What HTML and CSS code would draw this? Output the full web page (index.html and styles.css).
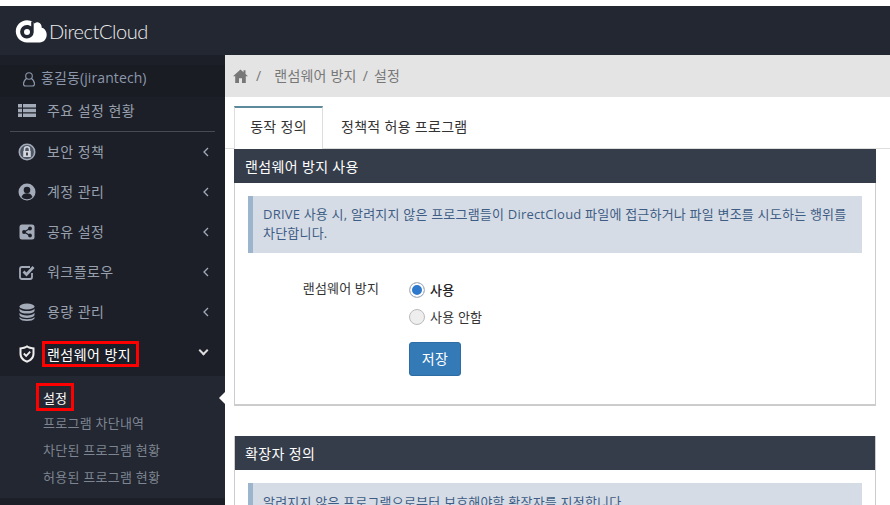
FILE: index.html
```html
<!DOCTYPE html>
<html lang="ko">
<head>
<meta charset="utf-8">
<title>DirectCloud</title>
<link rel="stylesheet" href="styles.css">
</head>
<body>
<header class="topbar">
  <svg class="logo" width="33" height="25" viewBox="0 0 33 25"><path fill="#fff" d="M12 1.200c2.300 0 4.500.7 6.200 2 .5.400.8.800 1.300 1.300C20.700 3.300 22.300 3 23.500 3.500c2.200.8 3.300 3 3.200 5.300 2.900.6 5 3.600 5 7 0 4.300-3 7.700-7 7.700H12C5.800 23.500.8 18.500.8 12.300.8 6.200 5.800 1.200 12 1.200z"/><path fill="#222732" d="M16.200 2.800h2.500v10.400a6.800 6.800 0 1 1-6.800-7.200c1.600 0 3.100.5 4.300 1.500z"/><circle cx="12" cy="13" r="3" fill="#fff"/></svg>
  <span class="brand">DirectCloud</span>
</header>
<div class="layout">
  <aside class="sidebar">
    <div class="user">
      <svg class="user-icon" width="14" height="16" viewBox="0 0 14 16"><circle cx="7" cy="5" r="3.300" fill="none" stroke="#8d97ab" stroke-width="1.100"/><path d="M4.500 7.500C2.500 9 1.500 11 1.500 13c0 1.300.7 2 2 2h7c1.300 0 2-.7 2-2 0-2-1-4-3-5.500" fill="none" stroke="#8d97ab" stroke-width="1.100"/></svg>
      <span class="user-name">홍길동(jirantech)</span>
    </div>
    <a class="item first"><svg class="ico" viewBox="0 0 18 16"><path fill="#a3abb9" d="M0 1h4v3.400H0zM5 1h13v3.400H5zM0 5.800h4v3.400H0zM5 5.800h13v3.400H5zM0 10.600h4V14H0zM5 10.600h13V14H5z"/></svg><span class="lbl">주요 설정 현황</span></a>
    <div class="divider"></div>
    <a class="item"><svg class="ico" viewBox="0 0 18 18"><circle cx="9" cy="9" r="8.500" fill="#a3abb9"/><circle cx="9" cy="9" r="6.900" fill="#4e5564"/><path fill="none" stroke="#d2d6de" stroke-width="1.500" d="M6.500 8V6.300a2.500 2.500 0 0 1 5 0V8"/><path fill="#d2d6de" d="M5.200 8h7.600v6H5.200z"/><path fill="#1c1f27" d="M8.200 9.500h1.600v3H8.200z"/></svg><span class="lbl">보안 정책</span><svg class="chev" viewBox="0 0 6 10"><path d="M5 1 1 5l4 4" fill="none" stroke="#a3abb9" stroke-width="1.300"/></svg></a>
    <a class="item"><svg class="ico" viewBox="0 0 18 18"><circle cx="9" cy="9" r="8.500" fill="#a3abb9"/><circle cx="9" cy="7" r="3.300" fill="#1c1f27"/><path fill="#1c1f27" d="M3.500 14c1-2.800 3-3.700 5.500-3.700s4.500.9 5.500 3.700A7.300 7.300 0 0 1 9 16.200 7.300 7.300 0 0 1 3.500 14z"/></svg><span class="lbl">계정 관리</span><svg class="chev" viewBox="0 0 6 10"><path d="M5 1 1 5l4 4" fill="none" stroke="#a3abb9" stroke-width="1.300"/></svg></a>
    <a class="item"><svg class="ico" viewBox="0 0 18 18"><rect x="1.500" y="1.500" width="15" height="15" rx="2.500" fill="#a3abb9"/><circle cx="12" cy="5.500" r="1.900" fill="#1c1f27"/><circle cx="12" cy="12.500" r="1.900" fill="#1c1f27"/><circle cx="6" cy="9" r="1.900" fill="#1c1f27"/><path d="M12 5.500 6 9l6 3.500" fill="none" stroke="#1c1f27" stroke-width="1.200"/></svg><span class="lbl">공유 설정</span><svg class="chev" viewBox="0 0 6 10"><path d="M5 1 1 5l4 4" fill="none" stroke="#a3abb9" stroke-width="1.300"/></svg></a>
    <a class="item"><svg class="ico" viewBox="0 0 18 18"><path fill="none" stroke="#a3abb9" stroke-width="1.800" d="M14 10v4c0 1.200-.6 2-2 2H4c-1.400 0-2-.8-2-2V6c0-1.400.6-2 2-2h8"/><path fill="none" stroke="#a3abb9" stroke-width="2.800" d="m5.500 8.500 3 3 7-7.500"/></svg><span class="lbl">워크플로우</span><svg class="chev" viewBox="0 0 6 10"><path d="M5 1 1 5l4 4" fill="none" stroke="#a3abb9" stroke-width="1.300"/></svg></a>
    <a class="item"><svg class="ico" viewBox="0 0 18 18"><ellipse cx="9" cy="3.500" rx="7.500" ry="3" fill="#a3abb9"/><path fill="#a3abb9" d="M1.500 5.500c1 1.800 4 2.600 7.500 2.600s6.500-.8 7.500-2.600V8c-1 1.800-4 2.600-7.500 2.600S2.500 9.800 1.500 8zM1.500 9.800c1 1.800 4 2.600 7.500 2.600s6.500-.8 7.500-2.600v2.500c-1 1.800-4 2.600-7.500 2.600s-6.500-.8-7.500-2.600zM1.500 14c1 1.600 4 2.200 7.500 2.200s6.500-.6 7.500-2.200v1.500c-1 1.700-4 2.500-7.500 2.500s-6.500-.8-7.500-2.500z"/></svg><span class="lbl">용량 관리</span><svg class="chev" viewBox="0 0 6 10"><path d="M5 1 1 5l4 4" fill="none" stroke="#a3abb9" stroke-width="1.300"/></svg></a>
    <a class="item active"><svg class="ico" viewBox="0 0 18 18"><path fill="#eee" d="M9 .3c2 1.300 4.500 2.100 7.500 2.300v6.100c0 4.400-3 7.500-7.500 9-4.500-1.500-7.500-4.600-7.500-9V2.600C4.500 2.400 7 1.600 9 .3z"/><path fill="#1c1f27" d="M9 2.500c1.700 1 3.500 1.500 5.500 1.800v4.400c0 3.200-2.200 5.500-5.500 6.800-3.300-1.300-5.500-3.600-5.500-6.800V4.300C5.500 4 7.300 3.500 9 2.500z"/><path fill="none" stroke="#eee" stroke-width="1.800" d="m5.800 8.500 2.400 2.400 4-4.200"/></svg><span class="lbl"><span class="mark mark-parent">랜섬웨어 방지</span></span><span class="chev-down"></span></a>
    <ul class="submenu">
      <li class="current"><span class="mark mark-sub">설정</span></li>
      <li>프로그램 차단내역</li>
      <li>차단된 프로그램 현황</li>
      <li>허용된 프로그램 현황</li>
    </ul>
    <span class="notch"></span>
  </aside>
  <main class="content">
    <nav class="crumbs">
      <svg class="home" width="15" height="14" viewBox="0 0 15 14"><path fill="#777" d="M7.500 .5 0 7.300h2.200V14h3.800V9.300h3V14h3.800V7.300H15L12.500 5V1.200h-2v2z"/></svg>
      <span class="sep first-sep">/</span><span class="crumb">랜섬웨어 방지</span><span class="sep">/</span><span class="crumb last">설정</span>
    </nav>
    <div class="tabs">
      <div class="tab on">동작 정의</div>
      <div class="tab">정책적 허용 프로그램</div>
    </div>
    <section class="panel first-panel">
      <h2 class="panel-head">랜섬웨어 방지 사용</h2>
      <div class="panel-body">
        <p class="alert">DRIVE 사용 시, 알려지지 않은 프로그램들이 DirectCloud 파일에 접근하거나 파일 변조를 시도하는 행위를 차단합니다.</p>
        <div class="form">
          <div class="form-label">랜섬웨어 방지</div>
          <div class="form-ctl">
            <div class="radio-row sel"><span class="radio on"></span>사용</div>
            <div class="radio-row"><span class="radio"></span>사용 안함</div>
            <button class="btn">저장</button>
          </div>
        </div>
      </div>
    </section>
    <section class="panel second-panel">
      <h2 class="panel-head">확장자 정의</h2>
      <div class="panel-body">
        <p class="alert alert-cut">알려지지 않은 프로그램으로부터 보호해야할 확장자를 지정합니다.</p>
      </div>
    </section>
  </main>
</div>
</body>
</html>
```
FILE: styles.css
```css
* { box-sizing: border-box; }
html, body { margin: 0; height: 505px; overflow: hidden; background: #fff; }
body {
  padding-top: 6px;
  font: 14px/20px "Open Sans", "Noto Sans CJK KR", sans-serif;
  color: #333;
}
.topbar {
  height: 49px;
  background: #222732;
  display: flex;
  align-items: center;
  padding-left: 15px;
}
.logo { flex: none; margin-right: 1px; margin-top: 1px; }
.brand { font: 300 20px/24px Lato, sans-serif; color: #eee; letter-spacing: -0.45px; }
.layout { display: flex; height: 450px; }
.sidebar {
  position: relative;
  flex: none;
  width: 225px;
  background: #1c1f27;
  padding-top: 10px;
  color: #98a0ae;
}
.user {
  height: 32px;
  background: #191c23;
  display: flex;
  align-items: flex-start;
  gap: 5px;
  padding-left: 22px;
  color: #8d97ab;
}
.user-name { line-height: 26px; letter-spacing: .1px; }
.user-icon { flex: none; margin-top: 6px; }
.item {
  height: 40px;
  display: flex;
  align-items: center;
  padding-left: 18px;
  color: #98a0ae;
  letter-spacing: .45px;
}
.item.first { height: 28px; }
.ico { width: 18px; height: 18px; flex: none; }
.lbl { margin-left: 11px; flex: 1; }
.chev { width: 6px; height: 10px; flex: none; margin-right: 16px; }
.chev-down {
  flex: none;
  width: 7px; height: 7px;
  margin-right: 18px;
  margin-top: -7px;
  border-right: 2px solid #ddd;
  border-bottom: 2px solid #ddd;
  transform: rotate(45deg);
}
.divider { height: 1px; background: #474a52; margin: 6px 10px 0; }
.item.active { height: 44px; }
.item.active .lbl { color: #fff; }
.mark { display: inline-block; color: #fff; outline: 3px solid #f00; outline-offset: -3px; }
.mark-parent { padding: 4px 8px 2px 5px; margin-left: -5px; height: 26px; }
.mark-sub { padding: 2px 7px; margin-left: -7px; height: 28px; letter-spacing: 0; }
.submenu {
  list-style: none;
  margin: 0;
  padding: 7px 0 0 43px;
  background: #232731;
  height: 122px;
  font-size: 13px;
  letter-spacing: .25px;
  color: #7e8592;
}
.submenu li { height: 27px; line-height: 27px; }
.submenu li.current { color: #fff; height: 27px; display: flex; align-items: center; }
.notch {
  position: absolute;
  right: 0;
  top: 337px;
  border: 6px solid transparent;
  border-right-color: #fff;
  border-left: 0;
}
.content { flex: 1; min-width: 0; }
.crumbs {
  height: 42px;
  background: #e4e4e4;
  display: flex;
  align-items: center;
  padding-left: 8px;
  color: #777;
  letter-spacing: .2px;
}
.home { flex: none; }
.sep { margin: 0 6px; }
.first-sep { margin: 0 13px 0 8px; }
.tabs {
  display: flex;
  margin-top: 9px;
  padding-left: 9px;
  height: 43px;
  border-bottom: 1px solid #ddd;
  letter-spacing: .3px;
}
.tab { padding: 11px 18px 0; color: #333; }
.tab.on {
  width: 89px;
  padding: 9px 0 0;
  text-align: center;
  background: #fff;
  height: 43px;
  border-top: 2px solid #5b8a9a;
  border-left: 1px solid #ddd;
  border-right: 1px solid #ddd;
}
.panel {
  margin: 0 14px 0 9px;
  border: 1px solid #ccc;
  border-top: 0;
  border-bottom-width: 2px;
}
.panel-head {
  margin: 0 -1px;
  height: 34px;
  background: #363d4a;
  color: #fff;
  font-size: 14px;
  font-weight: 400;
  padding-left: 11px;
  line-height: 36px;
  letter-spacing: .35px;
}
.first-panel { height: 257px; margin-bottom: 30px; }
.second-panel { height: 69px; border-bottom: 0; overflow: hidden; }
.panel-body { padding: 13px 13px 0; }
.alert {
  margin: 0;
  padding: 9px 12px 9px 10px;
  background: #d6dce6;
  border-left: 5px solid #9db5cc;
  color: #3e5d84;
  font-size: 13px;
  line-height: 19px;
  height: 57px;
  letter-spacing: .21px;
}
.alert-cut { letter-spacing: .2px; padding-top: 10px; }
.form { display: flex; margin-top: 25px; }
.form-label { width: 131px; text-align: right; font-size: 13px; line-height: 20px; letter-spacing: .15px; }
.form-ctl { margin-left: 30px; margin-top: -2px; }
.radio-row { display: flex; align-items: center; height: 27px; font-size: 13px; letter-spacing: .2px; }
.radio-row.sel { font-weight: 500; color: #222; }
.radio {
  width: 16px; height: 16px;
  margin-right: 5px;
  border-radius: 50%;
  border: 1px solid #bbb;
  background: #eee;
  flex: none;
}
.radio.on { background: #2f79cc; box-shadow: inset 0 0 0 2px #fff; }
.btn {
  display: block;
  margin-top: 12px;
  width: 52px;
  height: 34px;
  background: #337ab7;
  border: 1px solid #2e6da4;
  border-radius: 3px;
  color: #fff;
  font: inherit;
  letter-spacing: .4px;
  padding: 0;
}
```
